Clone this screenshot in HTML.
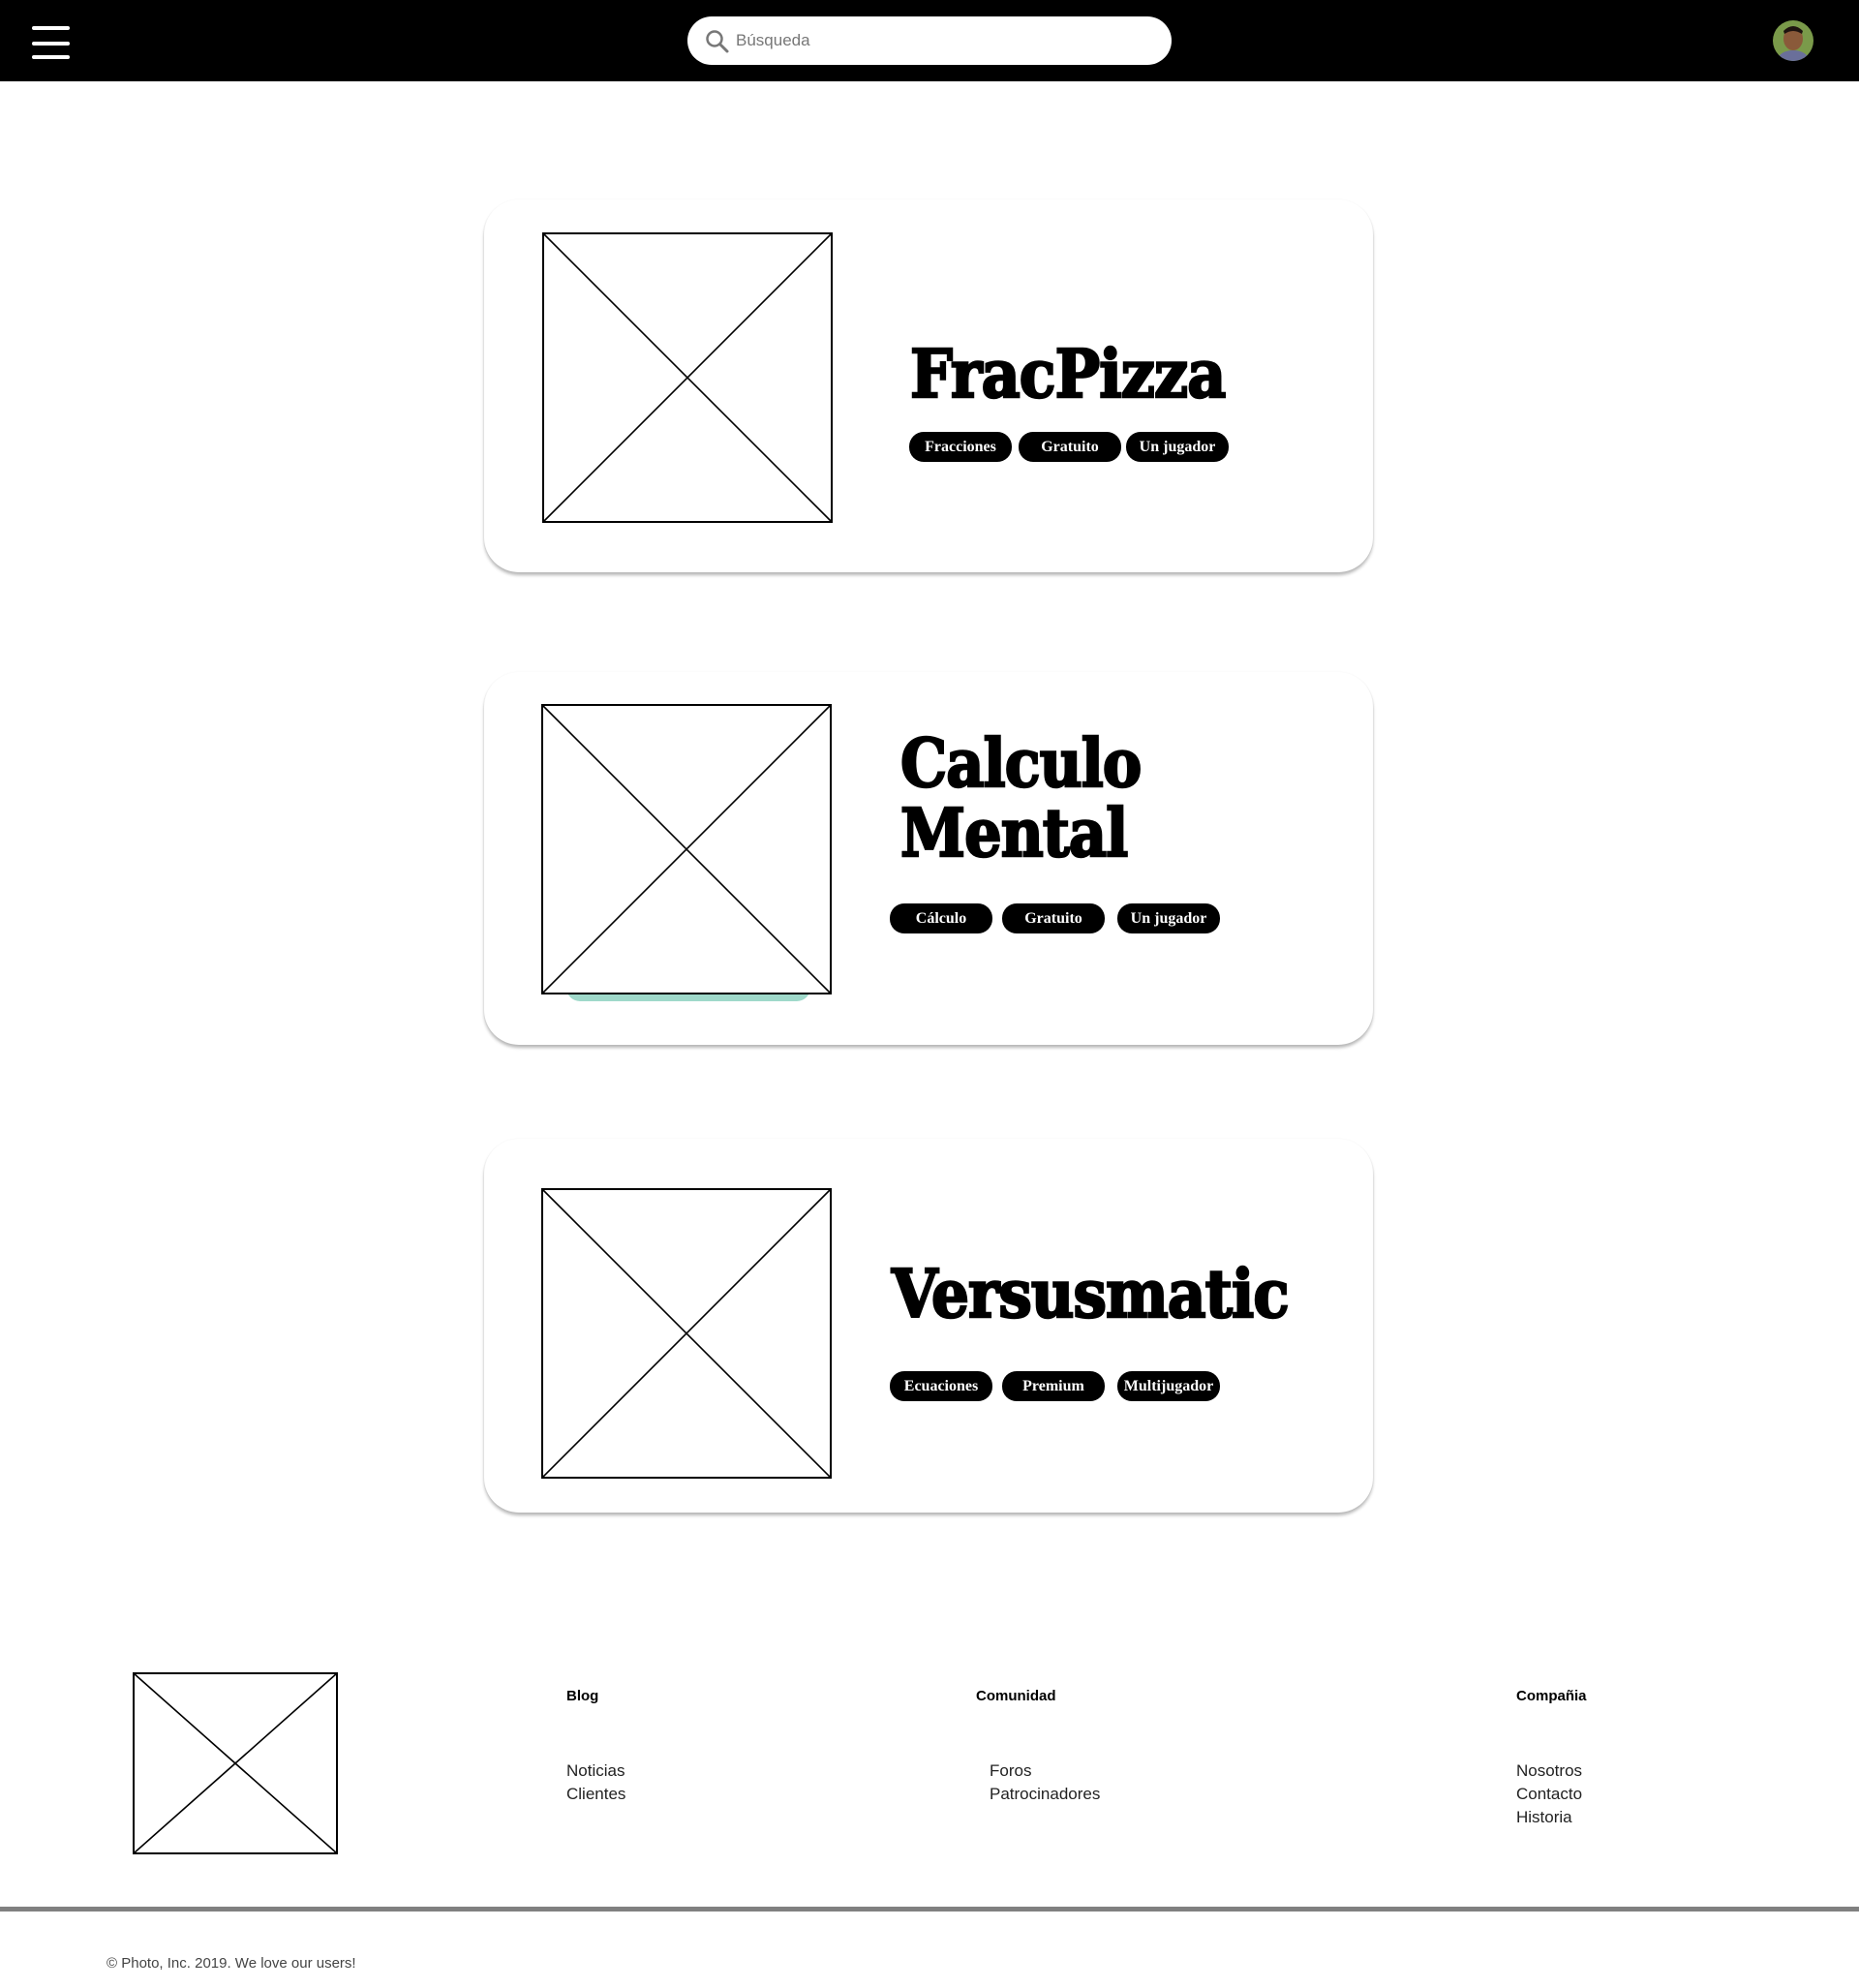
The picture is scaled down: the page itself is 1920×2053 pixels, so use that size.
<!DOCTYPE html>
<html><head><meta charset="utf-8">
<style>
*{margin:0;padding:0;box-sizing:border-box}
body{width:1920px;height:2053px;position:relative;background:#fff;font-family:"Liberation Sans",sans-serif;overflow:hidden}
.abs{position:absolute}
.hdr{left:0;top:0;width:1920px;height:84px;background:#000}
.bar{left:33px;width:39px;height:4px;background:#fff;border-radius:2px}
.search{left:710px;top:17px;width:500px;height:50px;background:#fff;border-radius:25px}
.card{left:500px;width:918px;background:#fff;border-radius:36px;box-shadow:0 3px 3px rgba(0,0,0,.28),0 0 2px rgba(0,0,0,.04)}
.title{font-family:"DejaVu Serif",serif;font-weight:bold;font-size:68px;line-height:72px;color:#000;white-space:nowrap;transform-origin:0 0;letter-spacing:-1px;-webkit-text-stroke:2.5px #000}
.tag{height:31px;width:106px;background:#000;color:#fff;border-radius:15px;font-family:"Liberation Serif",serif;font-weight:bold;font-size:16px;line-height:31px;text-align:center}
.fh{font-weight:bold;font-size:15px;color:#000}
.fl{font-size:17px;color:#222;line-height:24px}
</style></head><body>
<div class="abs hdr"></div>
<div class="abs bar" style="top:27px"></div>
<div class="abs bar" style="top:43px"></div>
<div class="abs bar" style="top:57px"></div>
<div class="abs search">
<svg class="abs" style="left:18px;top:13px" width="26" height="26" viewBox="0 0 26 26"><circle cx="10" cy="10" r="7.5" fill="none" stroke="#777" stroke-width="2.5"/><path d="M15.5 15.5 L23 23" stroke="#777" stroke-width="3" stroke-linecap="round"/></svg>
<div class="abs" style="left:50px;top:15px;font-size:17px;color:#777">Búsqueda</div>
</div>
<svg class="abs" style="left:1830px;top:20px" width="44" height="44" viewBox="0 0 44 44"><defs><clipPath id="c"><circle cx="22" cy="22" r="21"/></clipPath></defs><g clip-path="url(#c)"><rect width="44" height="44" fill="#7a9a4a"/><ellipse cx="22" cy="20" rx="10" ry="12" fill="#8a5a3a"/><path d="M12 12 Q22 2 32 12 L31 15 Q22 9 13 15Z" fill="#1e1410"/><path d="M4 44 Q8 32 22 32 Q36 32 40 44Z" fill="#6a6f9a"/></g></svg>

<!-- card 1 -->
<div class="abs card" style="top:206px;height:385px"></div>
<svg class="abs" style="left:560px;top:240px" width="300" height="300"><rect x="1" y="1" width="298" height="298" fill="#fff" stroke="#000" stroke-width="2"/><path d="M1 1L299 299M299 1L1 299" stroke="#000" stroke-width="1.6"/></svg>
<div class="abs title" style="left:940px;top:351px;transform:scaleX(0.91)">FracPizza</div>
<div class="abs tag" style="left:939px;top:446px">Fracciones</div>
<div class="abs tag" style="left:1052px;top:446px">Gratuito</div>
<div class="abs tag" style="left:1163px;top:446px">Un jugador</div>

<!-- card 2 -->
<div class="abs card" style="top:694px;height:385px"></div>
<div class="abs" style="left:585px;top:1020px;width:252px;height:14px;background:#9fd9ca;border-radius:0 0 14px 14px"></div>
<svg class="abs" style="left:559px;top:727px" width="300" height="300"><rect x="1" y="1" width="298" height="298" fill="#fff" stroke="#000" stroke-width="2"/><path d="M1 1L299 299M299 1L1 299" stroke="#000" stroke-width="1.6"/></svg>
<div class="abs title" style="left:930px;top:753px;transform:scaleX(0.89)">Calculo<br>Mental</div>
<div class="abs tag" style="left:919px;top:933px">Cálculo</div>
<div class="abs tag" style="left:1035px;top:933px">Gratuito</div>
<div class="abs tag" style="left:1154px;top:933px">Un jugador</div>

<!-- card 3 -->
<div class="abs card" style="top:1176px;height:386px"></div>
<svg class="abs" style="left:559px;top:1227px" width="300" height="300"><rect x="1" y="1" width="298" height="298" fill="#fff" stroke="#000" stroke-width="2"/><path d="M1 1L299 299M299 1L1 299" stroke="#000" stroke-width="1.6"/></svg>
<div class="abs title" style="left:921px;top:1301px;transform:scaleX(0.9)">Versusmatic</div>
<div class="abs tag" style="left:919px;top:1416px">Ecuaciones</div>
<div class="abs tag" style="left:1035px;top:1416px">Premium</div>
<div class="abs tag" style="left:1154px;top:1416px">Multijugador</div>

<!-- footer -->
<svg class="abs" style="left:137px;top:1727px" width="212" height="188"><rect x="1" y="1" width="210" height="186" fill="#fff" stroke="#000" stroke-width="2"/><path d="M1 1L211 187M211 1L1 187" stroke="#000" stroke-width="1.6"/></svg>
<div class="abs fh" style="left:585px;top:1743px">Blog</div>
<div class="abs fh" style="left:1008px;top:1743px">Comunidad</div>
<div class="abs fh" style="left:1566px;top:1743px">Compañia</div>
<div class="abs fl" style="left:585px;top:1817px">Noticias<br>Clientes</div>
<div class="abs fl" style="left:1022px;top:1817px">Foros<br>Patrocinadores</div>
<div class="abs fl" style="left:1566px;top:1817px">Nosotros<br>Contacto<br>Historia</div>
<div class="abs" style="left:0;top:1969px;width:1920px;height:5px;background:#808080"></div>
<div class="abs" style="left:110px;top:2019px;font-size:15px;color:#444">© Photo, Inc. 2019. We love our users!</div>
</body></html>
